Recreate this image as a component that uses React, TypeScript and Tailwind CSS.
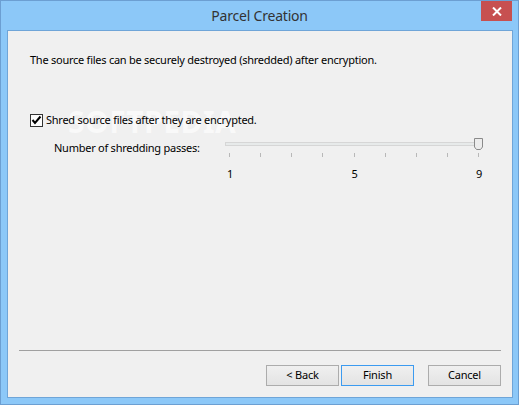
import React from 'react';

const font = { fontFamily: '"Noto Sans", "Open Sans", sans-serif' };

const ticks = [0, 1, 2, 3, 4, 5, 6, 7, 8];

const Button = ({ label, focused }: { label: string; focused?: boolean }) => (
  <button
    className={`w-[73px] h-[21px] text-[11px] tracking-[-0.2px] text-black bg-gradient-to-b from-[#f0f0f0] to-[#e3e3e3] border ${
      focused ? 'border-[#3c9bf0]' : 'border-[#acacac]'
    }`}
  >
    {label}
  </button>
);

const App = () => {
  return (
    <div className="w-[519px] h-[405px] bg-[#8cc8f8] border border-[#6c9fd2] flex flex-col relative" style={font}>
      {/* title bar */}
      <div className="h-[29px] flex items-center justify-center text-[14px] tracking-[-0.2px] text-[#333] pb-[1px]">
        Parcel Creation
      </div>
      <div className="absolute top-[0px] right-[6px] w-[31px] h-[20px] bg-[#c75050] flex items-center justify-center">
        <svg width="10" height="9" viewBox="0 0 10 9">
          <path d="M1 0.5 L9 8.5 M9 0.5 L1 8.5" stroke="white" strokeWidth="2" />
        </svg>
      </div>

      {/* client area */}
      <div className="ml-[6px] mr-[5px] h-[368px] bg-[#f0f0f0] border border-[#6fa5d8] flex flex-col relative text-[11px] tracking-[-0.25px] text-black">
        {/* watermark */}
        <div className="absolute left-[60px] top-[76px] text-[30px] leading-none font-bold tracking-[0.5px] text-white opacity-60 pointer-events-none">
          SOFTPEDIA
        </div>

        <p className="leading-[16px] ml-[22px] mt-[21px] relative">
          The source files can be securely destroyed (shredded) after encryption.
        </p>

        <label className="flex items-center ml-[22px] mt-[44px] h-[16px] relative">
          <span className="w-[13px] h-[13px] border border-[#333] bg-[#fdfdfd] flex items-center justify-center mr-[3px]">
            <svg width="11" height="10" viewBox="0 0 11 10">
              <path d="M1.5 5 L4 8 L9.5 1.5" stroke="black" strokeWidth="2" fill="none" />
            </svg>
          </span>
          Shred source files after they are encrypted.
        </label>

        <div className="flex items-start ml-[46px] mt-[9px] relative">
          <span className="w-[171px] leading-[16px] pt-[3px]">Number of shredding passes:</span>
          <div className="w-[258px] flex flex-col">
            <div className="relative h-[12px] mt-[1px]">
              <div className="absolute left-0 right-0 top-[4px] h-[4px] bg-[#e7eaea] border border-[#d6d6d6]" />
              <svg className="absolute right-0 top-0" width="9" height="12" viewBox="0 0 9 12">
                <path d="M0.5 0.5 H8.5 V9 L6.5 11.5 H2.5 L0.5 9 Z" fill="#ececec" stroke="#8a8a8a" />
              </svg>
            </div>
            <div className="flex justify-between px-[4px] mt-[3px] h-[5px]">
              {ticks.map((t) => (
                <span key={t} className="w-[1px] h-[4px] bg-[#b8b8b8]" />
              ))}
            </div>
            <div className="flex justify-between leading-[16px] mt-[8px] pl-[2px] pr-[1px]">
              <span>1</span>
              <span>5</span>
              <span>9</span>
            </div>
          </div>
        </div>

        <div className="flex-1" />
        <div className="mx-[11px] h-[1px] bg-[#a0a0a0]" />
        <div className="flex justify-end mt-[14px] mb-[11px] mr-[11px] gap-[2px]">
          <Button label="< Back" />
          <Button label="Finish" focused />
          <div className="w-[10px]" />
          <Button label="Cancel" />
        </div>
      </div>
    </div>
  );
};

export default App;
